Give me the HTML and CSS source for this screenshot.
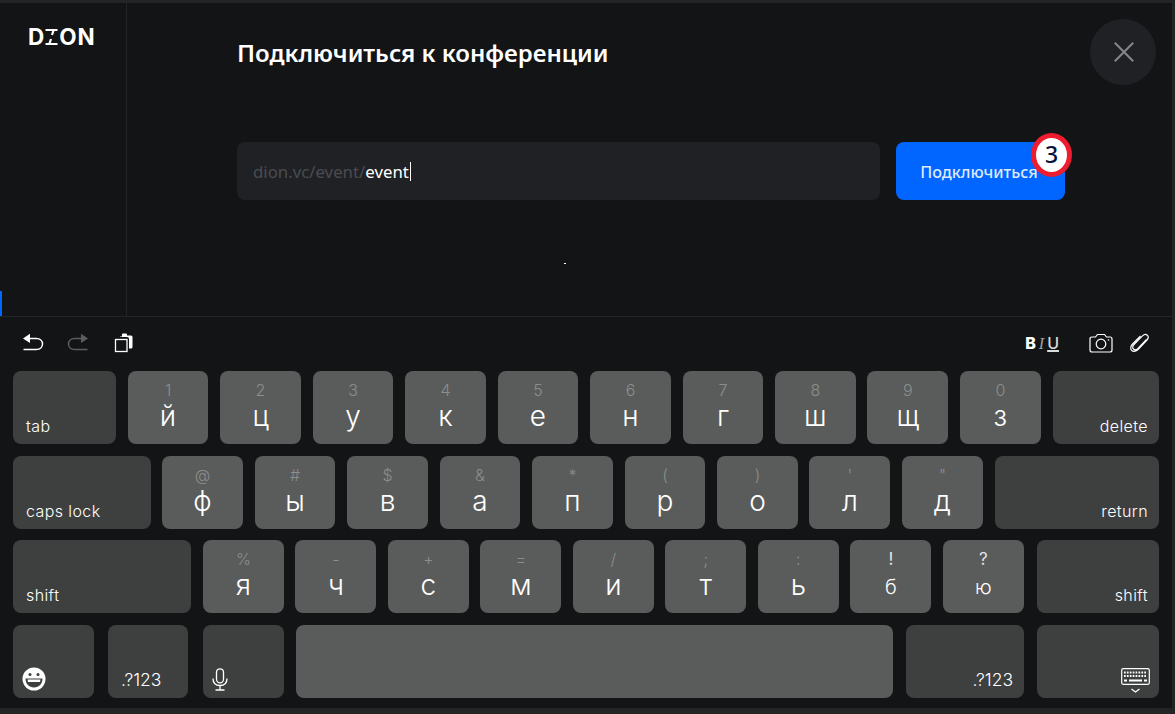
FILE: index.html
```html
<!DOCTYPE html>
<html lang="ru">
<head>
    <meta charset="UTF-8">
    <title>Подключиться к конференции</title>
    <link rel="stylesheet" href="styles.css">
</head>
<body>
<div class="app">
    <div class="screen">
        <aside class="sidebar">
            <div class="logo">
                <span>D</span>
                <svg class="logo-i" viewBox="0 0 15 16" width="15" height="16"><path d="M1.500 1H13.500M1.500 15H13.500" stroke="#fff" stroke-width="2" fill="none"/><path d="M9.500 1.500L8 6M7 10L5.500 14.500" stroke="#fff" stroke-width="2.200" fill="none"/></svg>
                <span class="logo-end">ON</span>
            </div>
            <div class="marker"></div>
        </aside>
        <main class="content">
            <div class="join">
                <h1>Подключиться к конференции</h1>
                <div class="join-form">
                    <div class="field"><span class="prefix">dion.vc/event/</span><span class="value">event</span><span class="caret"></span></div>
                    <button class="connect" type="button">Подключиться
                        <span class="badge">3</span>
                    </button>
                </div>
                <div class="dot"></div>
            </div>
            <button class="close" type="button" aria-label="Закрыть">
                <svg viewBox="0 0 20 20" width="20" height="20"><path d="M.8.8L19.2 19.2M19.2.8L.8 19.2" stroke="#85878b" stroke-width="2" fill="none"/></svg>
            </button>
        </main>
    </div>

    <div class="keyboard">
        <div class="toolbar">
            <div class="tools">
                <svg class="tool-undo" viewBox="0 0 22 20" width="22" height="20"><path d="M3 5.500H14.500C18 5.500 20.500 7.800 20.500 11C20.500 14.200 18 16.500 14.500 16.500H1.500" stroke="#fff" stroke-width="1.500" fill="none"/><path d="M8 .8V10L1 5.500Z" fill="#fff"/></svg>
                <svg class="tool-redo" viewBox="0 0 22 20" width="22" height="20"><path d="M19 5.500H7.500C4 5.500 1.500 7.800 1.500 11C1.500 14.200 4 16.500 7.500 16.500H20.500" stroke="#5b5d5e" stroke-width="1.500" fill="none"/><path d="M14 .8V10L21 5.500Z" fill="#5b5d5e"/></svg>
                <svg class="tool-copy" viewBox="0 0 20 20" width="20" height="20"><path d="M6 3.500H8V1.500Q8 .5 9 .5H12Q13 .5 13 1.500V2.500H17Q18.500 2.500 18.500 4V14Q18.500 15.500 17 15.500H15V6Q15 4 13 4H6Z" fill="#fff"/><rect x="1.500" y="6.500" width="11.500" height="12" fill="#131416" stroke="#fff" stroke-width="1.300"/></svg>
            </div>
            <div class="tools tools-right">
                <div class="biu"><b>B</b><i>I</i><u>U</u></div>
                <svg class="tool-camera" viewBox="0 0 24 20" width="24" height="20"><path d="M3 4H6.500L8.500 1.500H15.500L17.500 4H21Q23 4 23 6V17Q23 19 21 19H3Q1 19 1 17V6Q1 4 3 4Z" stroke="#fff" stroke-width="1.200" fill="none"/><circle cx="12" cy="11" r="4.800" stroke="#fff" stroke-width="1.200" fill="none"/><circle cx="19.500" cy="7" r=".8" fill="#fff"/></svg>
                <svg class="tool-clip" viewBox="0 0 20 20" width="20" height="20"><path d="M16.500 6.500L8 15.500C6.500 17 4.500 17 3.500 16C2.300 14.800 2.500 13 4 11.500L12.500 2.800C14 1.300 16 1 17.300 2.200C18.700 3.600 18.300 5.500 17 7L8.500 16C6.500 18.300 3.500 19 1.800 17.500C.2 16 .5 13 2.500 11L10.500 3" stroke="#fff" stroke-width="1.200" fill="none"/></svg>
            </div>
        </div>

        <div class="key-row">
            <div class="key fn w-tab"><span class="fn-label">tab</span></div>
            <div class="key"><span class="alt">1</span><span class="main">й</span></div>
            <div class="key"><span class="alt">2</span><span class="main">ц</span></div>
            <div class="key"><span class="alt">3</span><span class="main">у</span></div>
            <div class="key"><span class="alt">4</span><span class="main">к</span></div>
            <div class="key"><span class="alt">5</span><span class="main">е</span></div>
            <div class="key"><span class="alt">6</span><span class="main">н</span></div>
            <div class="key"><span class="alt">7</span><span class="main">г</span></div>
            <div class="key"><span class="alt">8</span><span class="main">ш</span></div>
            <div class="key"><span class="alt">9</span><span class="main">щ</span></div>
            <div class="key"><span class="alt">0</span><span class="main">з</span></div>
            <div class="key fn right w-delete"><span class="fn-label">delete</span></div>
        </div>

        <div class="key-row">
            <div class="key fn w-caps"><span class="fn-label">caps lock</span></div>
            <div class="key"><span class="alt">@</span><span class="main">ф</span></div>
            <div class="key"><span class="alt">#</span><span class="main">ы</span></div>
            <div class="key"><span class="alt">$</span><span class="main">в</span></div>
            <div class="key"><span class="alt">&amp;</span><span class="main">а</span></div>
            <div class="key"><span class="alt">*</span><span class="main">п</span></div>
            <div class="key"><span class="alt">(</span><span class="main">р</span></div>
            <div class="key"><span class="alt">)</span><span class="main">о</span></div>
            <div class="key"><span class="alt">'</span><span class="main">л</span></div>
            <div class="key"><span class="alt">"</span><span class="main">д</span></div>
            <div class="key fn right w-return"><span class="fn-label">return</span></div>
        </div>

        <div class="key-row">
            <div class="key fn w-shift-l"><span class="fn-label">shift</span></div>
            <div class="key"><span class="alt">%</span><span class="main">я</span></div>
            <div class="key"><span class="alt">-</span><span class="main">ч</span></div>
            <div class="key"><span class="alt">+</span><span class="main">с</span></div>
            <div class="key"><span class="alt">=</span><span class="main">м</span></div>
            <div class="key"><span class="alt">/</span><span class="main">и</span></div>
            <div class="key"><span class="alt">;</span><span class="main">т</span></div>
            <div class="key"><span class="alt">:</span><span class="main">ь</span></div>
            <div class="key"><span class="alt light">!</span><span class="main small">б</span></div>
            <div class="key"><span class="alt light">?</span><span class="main small">ю</span></div>
            <div class="key fn right w-shift-r"><span class="fn-label">shift</span></div>
        </div>

        <div class="key-row last-row">
            <div class="key fn w-emoji">
                <svg class="key-icon" viewBox="0 0 24 24" width="24" height="24"><circle cx="12" cy="12" r="11.500" fill="#fff"/><circle cx="8" cy="7.500" r="1.500" fill="#3e403f"/><circle cx="16" cy="7.500" r="1.500" fill="#3e403f"/><path d="M3.500 11.500H20.500C20.500 17 17 20.500 12 20.500C7 20.500 3.500 17 3.500 11.500Z" fill="#3e403f"/><path d="M5.500 12.500H18.500L18 15H6Z" fill="#fff"/></svg>
            </div>
            <div class="key fn w-num1"><span class="fn-label num">.?123</span></div>
            <div class="key fn w-mic">
                <svg class="key-icon" viewBox="0 0 16 23" width="16" height="23"><rect x="4.500" y=".8" width="7" height="14" rx="3.500" stroke="#fff" stroke-width="1.300" fill="none"/><path d="M1 10.500C1 15 3.500 17.500 8 17.500C12.500 17.500 15 15 15 10.500M8 17.500V22M3.500 22H12.500" stroke="#fff" stroke-width="1.300" fill="none"/></svg>
            </div>
            <div class="key w-space"></div>
            <div class="key fn right w-num2"><span class="fn-label num">.?123</span></div>
            <div class="key fn right w-hide">
                <svg class="key-icon" viewBox="0 0 30 26" width="30" height="26"><rect x=".7" y=".7" width="27.600" height="15.600" rx="1.500" stroke="#fff" stroke-width="1.200" fill="none"/><path d="M3 4.500H26M3 8H26" stroke="#fff" stroke-width="2" stroke-dasharray="1.700 1.200" fill="none"/><path d="M3 12.500H6M8 12.500H21M23 12.500H26" stroke="#fff" stroke-width="2" fill="none"/><path d="M10.500 21L14.500 24L18.500 21" stroke="#fff" stroke-width="1.300" fill="none"/></svg>
            </div>
        </div>
    </div>
</div>
</body>
</html>
```

FILE: styles.css
```css
html, body {
    margin: 0;
    height: 100%;
}
body {
    background-color: #242424;
    font-family: "Noto Sans", sans-serif;
    overflow: hidden;
}
.app {
    width: 1172px;
    height: 705px;
    margin-top: 3px;
    background-color: #131416;
    display: flex;
    flex-direction: column;
}

/* top part */
.screen {
    display: flex;
    height: 313px;
    border-bottom: 1px solid #232426;
}
.sidebar {
    width: 126px;
    border-right: 1px solid #232426;
    display: flex;
    flex-direction: column;
    justify-content: space-between;
}
.logo {
    display: flex;
    align-items: center;
    margin: 25px 0 0 28px;
    color: #fff;
    font-family: Inter, sans-serif;
    font-weight: 700;
    font-size: 22.500px;
    line-height: 18px;
    height: 18px;
}
.logo-end {
    letter-spacing: 1px;
}
.marker {
    width: 2px;
    height: 25px;
    background-color: #0066ff;
}
.content {
    flex: 1;
    display: flex;
    align-items: flex-start;
}
.join {
    width: 828px;
    margin-left: 110px;
}
h1 {
    margin: 34px 0 0;
    color: #fff;
    font-size: 24px;
    line-height: 32px;
    font-weight: 600;
}
.join-form {
    display: flex;
    gap: 16px;
    margin-top: 73px;
}
.field {
    flex: 1;
    height: 58px;
    box-sizing: border-box;
    padding-left: 16px;
    display: flex;
    align-items: center;
    background-color: #202125;
    border-radius: 8px;
    font-size: 16.800px;
}
.prefix {
    color: #4a4c50;
}
.value {
    color: #fff;
}
.caret {
    width: 1.500px;
    height: 19px;
    margin-left: 1px;
    background-color: #fff;
}
.connect {
    width: 169px;
    height: 58px;
    border: none;
    border-radius: 8px;
    background-color: #0066ff;
    color: #dfe9fb;
    font-family: "Noto Sans", sans-serif;
    font-size: 16.200px;
    font-weight: 500;
    position: relative;
    padding: 2px 3px 0 0;
}
.badge {
    position: absolute;
    top: -9px;
    right: -7px;
    width: 41px;
    height: 44px;
    box-sizing: border-box;
    border: 5px solid #ed1c2e;
    border-radius: 50%;
    background-color: #fff;
    color: #05143c;
    font-size: 23px;
    font-weight: 500;
    line-height: 33px;
    text-align: center;
}
.dot {
    width: 2px;
    height: 1px;
    background-color: #fff;
    margin: 63px 0 0 327px;
}
.close {
    width: 66px;
    height: 66px;
    margin: 16px 0 0 25px;
    border: none;
    border-radius: 50%;
    background-color: #202124;
    display: flex;
    align-items: center;
    justify-content: center;
    padding: 0 0 0 1px;
}

/* keyboard */
.keyboard {
    padding: 0 13px;
    font-family: Inter, sans-serif;
    color: #fff;
}
.toolbar {
    height: 52px;
    padding-bottom: 2px;
    display: flex;
    justify-content: space-between;
    align-items: center;
}
.tools {
    display: flex;
    align-items: center;
    padding: 0 0 0 9px;
}
.tools-right {
    padding: 0 9px 0 0;
}
.tool-redo {
    margin-left: 23px;
}
.tool-copy {
    margin-left: 25px;
}
.biu {
    font-size: 16px;
    display: flex;
    gap: 3px;
    align-items: baseline;
}
.biu b {
    font-weight: 800;
}
.biu i {
    color: #a0a2a3;
    font-family: "Liberation Serif", serif;
}
.biu u {
    text-decoration-thickness: 2px;
    color: #d9dadb;
    font-weight: 500;
}
.tool-camera {
    margin-left: 30px;
}
.tool-clip {
    margin-left: 17px;
}
.key-row {
    display: flex;
    width: 1146px;
    gap: 11.600px;
    margin-bottom: 11.600px;
}
.key-row > :last-child {
    margin-left: auto;
}
.key {
    width: 80.900px;
    height: 73px;
    flex-shrink: 0;
    box-sizing: border-box;
    border-radius: 8px;
    background-color: #5a5c5b;
    display: flex;
    flex-direction: column;
    align-items: center;
    padding-top: 10px;
}
.alt {
    font-size: 16px;
    line-height: 18px;
    font-weight: 300;
    color: #8c8e8d;
}
.alt.light {
    color: #e4e4e4;
    font-size: 17px;
    font-weight: 400;
}
.main {
    font-size: 28px;
    line-height: 32px;
    font-weight: 300;
    margin-top: 1px;
}
.main.small {
    font-size: 20px;
    margin-top: 3px;
}
.fn {
    background-color: #3e403f;
    align-items: flex-start;
    justify-content: flex-end;
    padding: 0 11px 8px 13px;
}
.fn.right {
    align-items: flex-end;
}
.fn-label {
    font-size: 16px;
    line-height: 20px;
    font-weight: 300;
    letter-spacing: .4px;
}
.num {
    font-size: 17.500px;
    letter-spacing: 0;
}
.w-tab { width: 103px; }
.w-delete { width: 106px; }
.w-caps { width: 137.500px; }
.w-return { width: 164px; }
.w-shift-l { width: 178.400px; }
.w-shift-r { width: 122px; }
.w-emoji { width: 81px; padding-left: 9px; padding-bottom: 7px; }
.w-num1 { width: 80px; margin-left: 1px; }
.w-mic { width: 81px; margin-left: 2px; padding-left: 9px; padding-bottom: 7px; }
.w-space { width: 597px; margin-left: -1px; }
.w-num2 { width: 118px; }
.w-hide { width: 122px; padding-right: 8px; padding-bottom: 4px; }
.key-icon {
    display: block;
}
.last-row {
    gap: 13px;
    margin-bottom: 0;
}
```
